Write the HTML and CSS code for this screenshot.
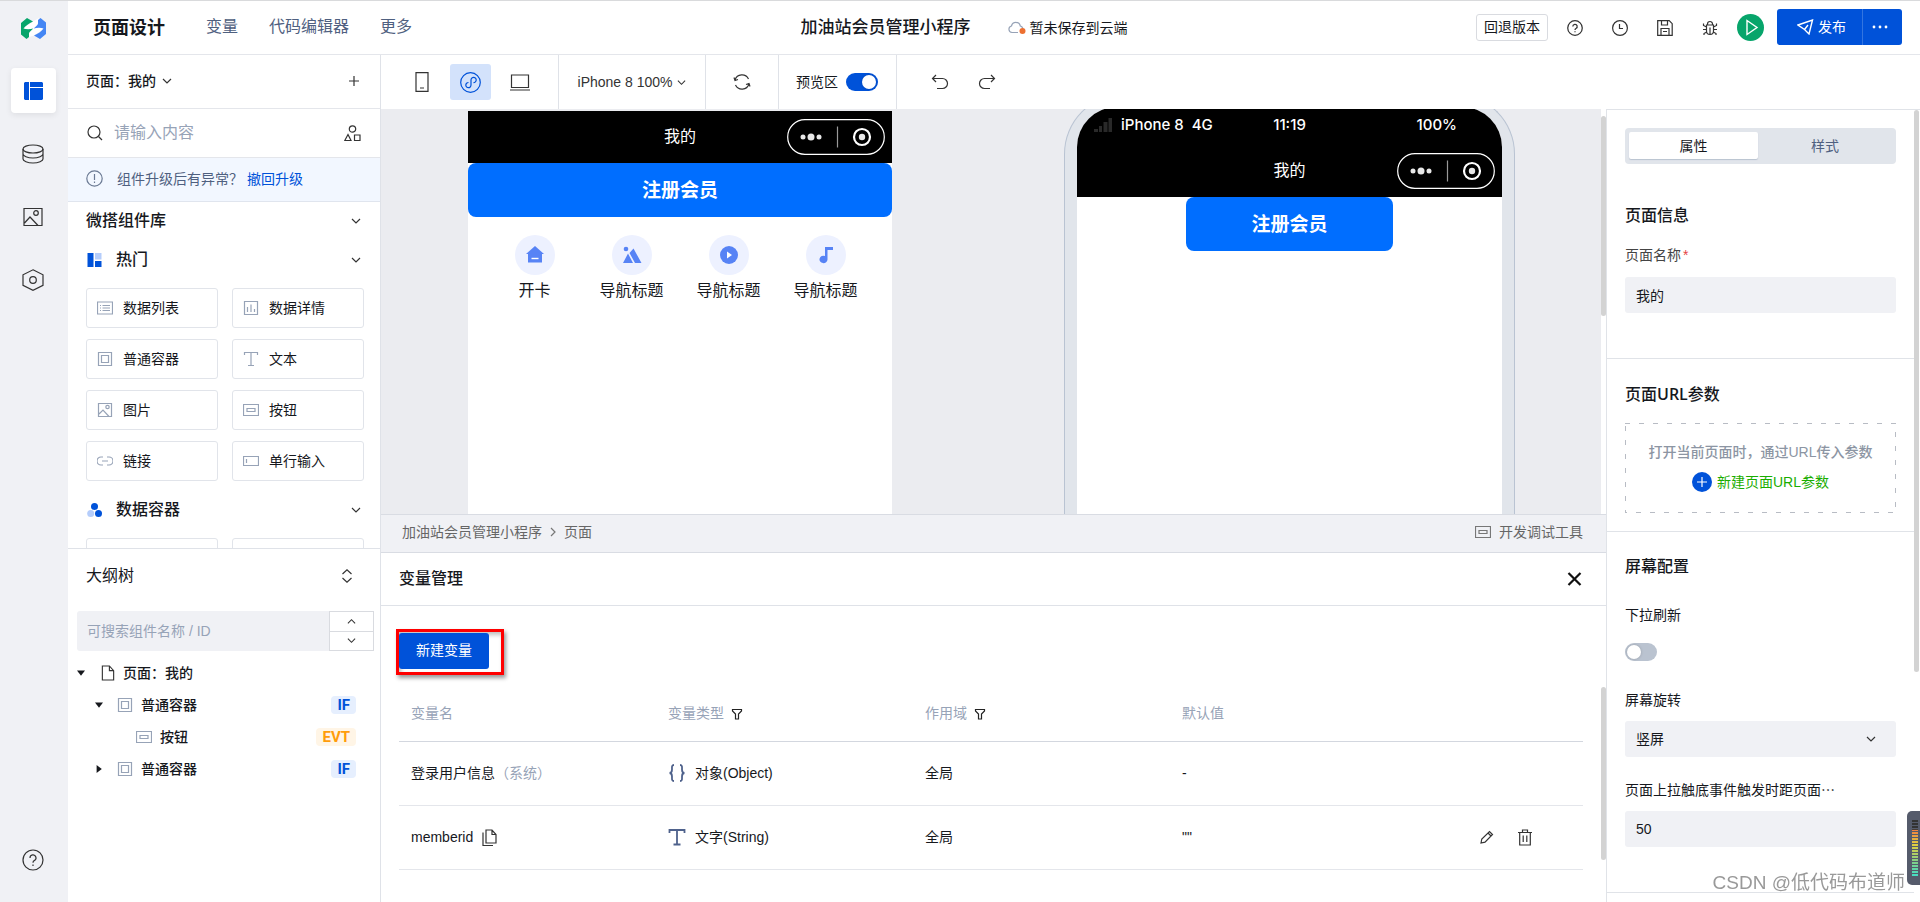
FILE: index.html
```html
<!DOCTYPE html>
<html lang="zh-CN">
<head>
<meta charset="utf-8">
<meta name="viewport" content="width=device-width, initial-scale=1">
<title>页面设计</title>
<link rel="stylesheet" href="styles.css">
</head>
<body>
<svg class="sprite" aria-hidden="true">
  <symbol id="i-down" viewBox="0 0 10 10"><path d="M1 3l4 4 4-4"/></symbol>
  <symbol id="i-up" viewBox="0 0 10 10"><path d="M1 7l4-4 4 4"/></symbol>
  <symbol id="i-box" viewBox="0 0 16 16"><path d="M1.500 1.500h13v13h-13zM4.500 4.500h7v7h-7z"/></symbol>
  <symbol id="i-btn" viewBox="0 0 16 16"><path d="M.5 2.500h15v11H.5zM4 6.500h8v3H4z"/></symbol>
  <symbol id="i-image" viewBox="0 0 16 16"><path d="M1.500 1.500h13v13h-13zM2 12l4-4 6 6.500"/><circle cx="10.500" cy="5" r="1.700"/></symbol>
  <symbol id="i-help" viewBox="0 0 22 22"><circle cx="11" cy="11" r="10"/><path d="M8 9a3 3 0 1 1 4.300 2.600c-.9.500-1.300 1-1.300 2.100"/><path d="M11 15.500v1.500"/></symbol>
  <symbol id="i-filter" viewBox="0 0 12 12"><path d="M1.500 1.500h9v1.500L7.500 6v5h-3V6l-3-3z"/></symbol>
  <symbol id="i-capsule" viewBox="0 0 98 36"><rect x=".7" y=".7" width="96.600" height="34.600" rx="17.300" stroke="#fff"/><g fill="#e8e8e8" stroke="none"><circle cx="16" cy="18" r="2.500"/><circle cx="24" cy="18" r="3.500"/><circle cx="32" cy="18" r="2.500"/><circle cx="75" cy="18" r="3.200"/></g><path stroke="#999" d="M50.500 7.500v21"/><circle cx="75" cy="18" r="8" stroke="#fff" stroke-width="2.200"/></symbol>
</svg>

<div class="app">
  <aside class="rail">
    <svg class="logo" viewBox="0 0 25 21"><path fill="#fff" d="M12 3.500L18 0l-1 9 7 1-11 7.500L8 19V12L1 11z"/><path fill="#07a56b" d="M0 5L6 0l6 3.500C8 5.500 4.500 7.500 2.500 10.500 5 11.500 9 11.500 12.300 10.500 10 12.500 8.300 14 8 15.500V19L5.500 21 0 16.500z"/><path fill="#4486f4" d="M25 16l-6 5-6-3.500c4-2 7.500-4 9.500-7C20 9.500 16 9.500 12.700 10.500 15 8.500 16.700 7 17 5.500V2L19.500 0 25 4.500z"/></svg>
    <nav class="rail-nav">
      <button class="rail-btn active" aria-label="页面"><svg width="19" height="18" viewBox="0 0 19 18"><path fill="#0052d9" stroke="none" d="M0 1l1-1h4v18H1l-1-1zM6 0h12l1 1v4H6zM6 6h13v11l-1 1H6z"/></svg></button>
      <button class="rail-btn" aria-label="数据"><svg width="22" height="20" viewBox="0 0 22 20"><ellipse cx="11" cy="5" rx="10" ry="4"/><path d="M1 5v10c0 2 4.500 4 10 4s10-2 10-4V5M1 10c0 2 4.500 4 10 4s10-2 10-4"/></svg></button>
      <button class="rail-btn" aria-label="素材"><svg width="20" height="20" viewBox="0 0 20 20"><path d="M1 1.500h18v17H1zM1.500 16L7 10l8 8.500"/><circle cx="13" cy="6" r="2.300"/></svg></button>
      <button class="rail-btn" aria-label="设置"><svg width="22" height="22" viewBox="0 0 22 22"><path d="M11 .8l10 5v10.500l-10 5-10-5V5.800z"/><circle cx="11" cy="11" r="3.300"/></svg></button>
    </nav>
    <button class="rail-btn rail-help" aria-label="帮助"><svg width="22" height="22"><use href="#i-help"/></svg></button>
  </aside>

  <header class="header">
    <h1 class="brand">页面设计</h1>
    <nav class="menu"><a href="#">变量</a><a href="#">代码编辑器</a><a href="#">更多</a></nav>
    <div class="doc">
      <span class="doc-name">加油站会员管理小程序</span>
      <span class="doc-state"><svg width="18" height="14" viewBox="0 0 18 14"><path stroke="#97a3b7" d="M10 11.500H4a3.300 3.300 0 0 1-.5-6.500A4.500 4.500 0 0 1 12.300 5c1.700.5 2.500 1.700 2.500 3"/><circle cx="14.500" cy="10" r="3" fill="#ed7031" stroke="none"/></svg>暂未保存到云端</span>
    </div>
    <button class="rollback">回退版本</button>
    <div class="tools">
      <button class="icon" aria-label="帮助"><svg width="16" height="16"><use href="#i-help" class="thick"/></svg></button>
      <button class="icon" aria-label="历史"><svg width="16" height="16" viewBox="0 0 16 16"><circle cx="8" cy="8" r="7.400"/><path d="M7.500 4v4.500H11"/></svg></button>
      <button class="icon" aria-label="保存"><svg width="16" height="16" viewBox="0 0 16 16"><path d="M.7.700h11.500l3 3v11.600H.7zM4.500 1v4h6V1M4 15V8.500h8V15M6 11.500h4"/></svg></button>
      <button class="icon" aria-label="调试"><svg width="16" height="16" viewBox="0 0 16 16"><path d="M4.500 5h7v6a3.500 3.500 0 0 1-7 0zM5.500 5V4a2.500 2.500 0 0 1 5 0v1M8 7.500V14M4.500 7L1.500 5.500V3.500M11.500 7l3-1.500v-2M4.500 9.500H1M11.500 9.500H15M4.700 12L2 13.500V15M11.300 12l2.700 1.500V15"/></svg></button>
    </div>
    <button class="play" aria-label="预览"><svg width="27" height="27" viewBox="0 0 27 27"><path d="M10 6.500v14l10-7z"/></svg></button>
    <div class="publish">
      <button class="publish-main"><svg width="17" height="16" viewBox="0 0 17 16"><path d="M1 6L15.500 1 12 15 7.500 10.500zM7.500 10.500L11 6"/></svg>发布</button>
      <button class="publish-more" aria-label="更多"><svg width="16" height="4" viewBox="0 0 16 4"><g fill="#fff" stroke="none"><circle cx="2" cy="2" r="1.400"/><circle cx="8" cy="2" r="1.400"/><circle cx="14" cy="2" r="1.400"/></g></svg></button>
    </div>
  </header>

  <aside class="side">
    <div class="page-row"><button class="page-pick">页面：我的 <svg width="10" height="10"><use href="#i-down"/></svg></button><button class="icon" aria-label="新增"><svg width="12" height="12" viewBox="0 0 12 12"><path d="M6 1v10M1 6h10"/></svg></button></div>
    <div class="find-row">
      <svg width="16" height="16" viewBox="0 0 16 16"><circle cx="7" cy="7" r="6"/><path d="M11.500 11.500L15 15"/></svg>
      <input class="find" type="text" placeholder="请输入内容" aria-label="搜索组件">
      <svg width="17" height="17" viewBox="0 0 17 17"><circle cx="8.500" cy="4" r="3.200"/><path d="M4 9.500L.8 15.500h6.200zM10.500 10h5.500v5.500h-5.500z"/></svg>
    </div>
    <div class="notice"><svg width="17" height="17" viewBox="0 0 17 17"><circle cx="8.500" cy="8.500" r="7.700"/><path d="M8.500 4v6M8.500 11.500v1.500"/></svg><span>组件升级后有异常？</span><a href="#">撤回升级</a></div>
    <section class="lib">
      <h2 class="lib-title">微搭组件库<svg width="10" height="10"><use href="#i-down"/></svg></h2>
      <h3 class="lib-group"><svg width="15" height="14" viewBox="0 0 15 14"><g stroke="none"><path fill="#0052d9" d="M.5 0h6v14h-6zM8 8h6.500v6H8z"/><path fill="#b5cdfb" d="M8 0h6.500v6.500H8z"/></g></svg><span>热门</span><svg width="10" height="10"><use href="#i-down"/></svg></h3>
      <div class="tiles">
        <button class="tile"><svg viewBox="0 0 16 16"><path d="M.5 2h15v12H.5zM3 5.500h1M3 8h1M3 10.500h1M5.500 5.500H13M5.500 8H13M5.500 10.500H13"/></svg>数据列表</button>
        <button class="tile"><svg viewBox="0 0 16 16"><path d="M1.500 1.500h13v13h-13zM4.500 7v5M8 4.500V12M11.500 9v3"/></svg>数据详情</button>
        <button class="tile"><svg><use href="#i-box"/></svg>普通容器</button>
        <button class="tile"><svg viewBox="0 0 16 16"><path d="M1.500 4V1.500h13V4M8 1.500v13M5 14.500h6"/></svg>文本</button>
        <button class="tile"><svg><use href="#i-image"/></svg>图片</button>
        <button class="tile"><svg><use href="#i-btn"/></svg>按钮</button>
        <button class="tile"><svg viewBox="0 0 16 16"><path d="M6 4H4a4 4 0 0 0 0 8h2M10 4h2a4 4 0 0 1 0 8h-2M5 8h6"/></svg>链接</button>
        <button class="tile"><svg viewBox="0 0 16 16"><path d="M.5 3.500h15v9H.5zM3.500 6v4"/></svg>单行输入</button>
      </div>
      <h3 class="lib-group"><svg width="15" height="14" viewBox="0 0 15 14"><g stroke="none"><circle cx="7.500" cy="3.500" r="3.500" fill="#0052d9"/><circle cx="3.700" cy="10.500" r="3.500" fill="#b5cdfb"/><circle cx="11.500" cy="10.500" r="3.500" fill="#0052d9"/></g></svg><span>数据容器</span><svg width="10" height="10"><use href="#i-down"/></svg></h3>
      <div class="tiles"><button class="tile" aria-label="组件"></button><button class="tile" aria-label="组件"></button></div>
    </section>
    <section class="outline">
      <h2 class="outline-title">大纲树<svg width="12" height="14" viewBox="0 0 12 14"><path d="M1.500 5L6 .8 10.500 5M1.500 9L6 13.200 10.500 9"/></svg></h2>
      <div class="outline-find">
        <input type="text" placeholder="可搜索组件名称 / ID" aria-label="搜索大纲">
        <div class="steps"><button aria-label="上一个"><svg width="9" height="9"><use href="#i-up"/></svg></button><button aria-label="下一个"><svg width="9" height="9"><use href="#i-down"/></svg></button></div>
      </div>
      <ul class="tree">
        <li><span class="caret open"></span><svg class="file" viewBox="0 0 14 17"><path d="M1 1h7.500l4.500 5v10H1zM8.500 1v5H13"/></svg>页面：我的</li>
        <li class="l1"><span class="caret open"></span><svg class="dim"><use href="#i-box"/></svg>普通容器<b class="tag">IF</b></li>
        <li class="l2"><svg class="dim"><use href="#i-btn"/></svg>按钮<b class="tag evt">EVT</b></li>
        <li class="l1"><span class="caret"></span><svg class="dim"><use href="#i-box"/></svg>普通容器<b class="tag">IF</b></li>
      </ul>
    </section>
  </aside>

  <div class="toolbar">
    <div class="tb devices">
      <button aria-label="手机"><svg width="14" height="20" viewBox="0 0 14 20"><path d="M1 .7h12v18.600H1zM5 16h4"/></svg></button>
      <button class="on" aria-label="小程序"><svg width="21" height="21" viewBox="0 0 21 21"><circle cx="10.500" cy="10.500" r="9.800"/><path d="M8.500 10.500a2.600 2.600 0 1 0 2.500 2.600V8a2.600 2.600 0 1 1 2.500 2.600"/></svg></button>
      <button aria-label="电脑"><svg width="20" height="17" viewBox="0 0 20 17"><path d="M1.500 1h17v12.500h-17zM0 16h20"/></svg></button>
    </div>
    <div class="tb"><button class="zoom">iPhone 8 100% <svg width="9" height="9"><use href="#i-down"/></svg></button></div>
    <div class="tb refresh"><button class="icon" aria-label="刷新"><svg width="18" height="18" viewBox="0 0 18 18"><path d="M2 7a7.300 7.300 0 0 1 13.500-1M16 11a7.300 7.300 0 0 1-13.500 1M1 4.500L2 7.500l3-1M17 13.500l-1-3-3 1"/></svg></button></div>
    <div class="tb area"><label class="switch-row">预览区<input class="switch" type="checkbox" checked></label></div>
    <div class="tb undo">
      <button class="icon" aria-label="撤销"><svg width="18" height="16" viewBox="0 0 18 16"><path d="M5 1L1.500 4.500 5 8M1.500 4.500h10a5 5 0 0 1 0 10H6"/></svg></button>
      <button class="icon" aria-label="重做"><svg width="18" height="16" viewBox="0 0 18 16"><path d="M13 1l3.500 3.500L13 8M16.500 4.500h-10a5 5 0 0 0 0 10H12"/></svg></button>
    </div>
  </div>

  <main class="work">
    <div class="stage">
      <div class="canvas">
        <div class="preview">
          <div class="mini-bar"><span>我的</span><svg class="capsule"><use href="#i-capsule"/></svg></div>
          <button class="join">注册会员</button>
          <div class="navs">
            <div class="nav"><span class="dot"><svg viewBox="0 0 20 20"><path d="M10 1l9 8h-2v8.500H3V9H1z"/><path d="M6.500 13.500h7" stroke="#fff" stroke-width="1.400"/></svg></span>开卡</div>
            <div class="nav"><span class="dot"><svg viewBox="0 0 20 20"><circle cx="4" cy="4" r="2.300"/><path d="M1 18l5-9.500L11 18zM7.500 8l4-4.500L19.500 18H13z"/></svg></span>导航标题</div>
            <div class="nav"><span class="dot"><svg viewBox="0 0 20 20"><circle cx="10" cy="10" r="9"/><path fill="#fff" d="M8 6.500v7l5-3.500z"/></svg></span>导航标题</div>
            <div class="nav"><span class="dot"><svg viewBox="0 0 20 20"><path d="M9 2h8v3h-5.500v9.500A4 3.700 0 1 1 9 11z"/></svg></span>导航标题</div>
          </div>
        </div>
        <div class="phone">
          <div class="screen">
            <div class="status"><span class="carrier"><svg width="18" height="14" viewBox="0 0 18 14"><path fill="#292929" stroke="none" d="M0 11h4v3H0zM5 8h3v6H5zM9.500 4h4v10h-4zM14.500 0H18v14h-3.500z"/></svg>iPhone 8&nbsp; 4G</span><span>11:19</span><span>100%</span></div>
            <div class="mini-bar"><span>我的</span><svg class="capsule"><use href="#i-capsule"/></svg></div>
            <button class="join small">注册会员</button>
          </div>
        </div>
      </div>
      <div class="gutter"><span class="thumb"></span></div>
    </div>
    <div class="crumbs"><span>加油站会员管理小程序</span><svg width="6" height="10" viewBox="0 0 6 10"><path d="M1 1l4 4-4 4"/></svg><span>页面</span><button class="devtools"><svg width="16" height="16"><use href="#i-btn"/></svg>开发调试工具</button></div>
    <div class="vars-head"><h2>变量管理</h2><button aria-label="关闭"><svg width="15" height="14" viewBox="0 0 15 14"><path d="M1.500 1l12 12M13.500 1l-12 12" stroke-width="2.200"/></svg></button></div>
    <div class="vars">
      <div class="vars-body">
        <div class="mark"><button class="create">新建变量</button></div>
        <table class="table">
          <colgroup><col class="c"><col class="c"><col class="c"><col class="c"><col></colgroup>
          <thead><tr><th>变量名</th><th>变量类型<svg class="flt"><use href="#i-filter"/></svg></th><th>作用域<svg class="flt"><use href="#i-filter"/></svg></th><th>默认值</th><th></th></tr></thead>
          <tbody>
            <tr><td>登录用户信息<span class="sys">（系统）</span></td><td><span class="type"><svg width="18" height="18" viewBox="0 0 18 18"><path stroke="#4f628c" stroke-width="1.800" d="M6 1C3.500 1 4 3 4 5.500S3.500 9 1.500 9C3.500 9 4 10 4 12.500S3.500 17 6 17M12 1c2.500 0 2 2 2 4.500S14.500 9 16.500 9C14.500 9 14 10 14 12.500s.5 4.500-2 4.500"/></svg>对象(Object)</span></td><td>全局</td><td>-</td><td></td></tr>
            <tr><td><span class="name">memberid<svg width="15" height="17" viewBox="0 0 15 17"><path d="M4 1h6l4 4.500V14H4zM10 1v4.500h4M1 3.500V16.500h10"/></svg></span></td><td><span class="type"><svg width="18" height="18" viewBox="0 0 18 18"><path stroke="#4f628c" stroke-width="1.800" d="M1.500 5V2h15v3M9 2v14.500M5.500 16.500h7"/></svg>文字(String)</span></td><td>全局</td><td>""</td><td><span class="acts"><button class="icon" aria-label="编辑"><svg width="14" height="14" viewBox="0 0 14 14"><path d="M1 13l.8-4L9.500 1.500l3 3L5 12.200zM8 3l3 3"/></svg></button><button class="icon" aria-label="删除"><svg width="14" height="17" viewBox="0 0 14 17"><path d="M0 3.500h14M4.500 3.500V1h5v2.500M1.700 3.500v12.500h10.600V3.500M5.200 6.500v6.500M8.800 6.500v6.500"/></svg></button></span></td></tr>
          </tbody>
        </table>
      </div>
      <div class="gutter low"><span class="thumb"></span></div>
    </div>
  </main>

  <aside class="props">
    <div class="props-body">
      <section class="sec first">
        <div class="tabs"><button class="on">属性</button><button>样式</button></div>
        <h2>页面信息</h2>
        <label class="lab soft" for="pname">页面名称<i>*</i></label>
        <input class="field" id="pname" type="text" value="我的">
      </section>
      <section class="sec url">
        <h2>页面<span class="latin">URL</span>参数</h2>
        <div class="drop"><svg class="dash" width="100%" height="100%"><rect x="0" y="0" width="100%" height="100%"/></svg><p>打开当前页面时，通过URL传入参数</p><button class="add"><svg width="20" height="20" viewBox="0 0 20 20"><circle cx="10" cy="10" r="10" fill="#0052d9" stroke="none"/><path stroke="#fff" d="M10 5v10M5 10h10"/></svg>新建页面URL参数</button></div>
      </section>
      <section class="sec conf">
        <h2>屏幕配置</h2>
        <label class="lab" for="pull">下拉刷新</label>
        <input class="switch" id="pull" type="checkbox">
        <label class="lab" for="rot">屏幕旋转</label>
        <span class="select"><select class="field" id="rot"><option>竖屏</option></select><svg width="10" height="10"><use href="#i-down"/></svg></span>
        <label class="lab" for="dist">页面上拉触底事件触发时距页面<span class="mid">⋯</span></label>
        <input class="field" id="dist" type="text" value="50">
      </section>
    </div>
    <div class="gutter right"><span class="thumb"></span></div>
  </aside>
</div>
<div class="watermark">CSDN @低代码布道师</div>
<div class="gadget"><span></span></div>
</body>
</html>
```
FILE: styles.css
```css
* { box-sizing: border-box; }
html, body { height: 100%; margin: 0; }
body {
  font: 14px/20px "Liberation Sans", "Noto Sans CJK SC", sans-serif;
  color: #16181d; background: #fff; overflow: hidden;
}
h1, h2, h3, p, ul { margin: 0; padding: 0; font-weight: 500; }
ul { list-style: none; }
button, input, select { font: inherit; color: inherit; border: 0; padding: 0; background: none; outline: 0; }
button { display: inline-flex; align-items: center; justify-content: center; white-space: nowrap; }
a { color: #0052d9; text-decoration: none; }
svg { fill: none; stroke: #333; stroke-width: 1.2; flex: none; }
.sprite { position: absolute; width: 0; height: 0; }
.thick { stroke-width: 1.7; }

.app {
  height: 100vh; display: grid; border-top: 1px solid #d9dadc;
  grid-template-columns: 68px 313px minmax(0, 1fr) 314px;
  grid-template-rows: 54px 54px minmax(0, 1fr);
}

/* rail */
.rail { grid-row: 1 / 4; background: #f0f1f5; display: flex; flex-direction: column; align-items: center; padding: 17px 2px 20px 0; }
.logo { width: 25px; height: 21px; margin-bottom: 29px; stroke: none; }
.rail-nav { display: flex; flex-direction: column; gap: 18px; }
.rail-btn { width: 45px; height: 45px; border-radius: 4px; }
.rail-btn.active { background: #fff; box-shadow: 0 2px 6px rgba(0, 0, 0, .08); }
.rail-help { margin-top: auto; }

/* header */
.header { grid-column: 2 / 5; display: flex; align-items: center; padding: 0 18px 0 25px; border-bottom: 1px solid #e4e6eb; }
.brand { font-size: 18px; font-weight: 700; }
.menu { display: flex; gap: 31px; margin-left: 41px; padding-bottom: 2px; font-size: 16px; }
.menu a { color: #4f6080; }
.doc { display: flex; align-items: center; gap: 37px; margin: 0 auto; padding-left: 40px; }
.doc-name { font-size: 17px; font-weight: 500; }
.doc-state { display: flex; align-items: center; gap: 4px; }
.rollback { width: 72px; height: 27px; padding-bottom: 1px; border: 1px solid #d9dbe0; border-radius: 3px; }
.tools { display: flex; gap: 29px; margin: 0 19px; }
.play { width: 27px; height: 27px; border-radius: 50%; background: #07a56b; }
.play svg, .publish svg { stroke: #fff; stroke-width: 1.4; }
.publish { display: flex; height: 36px; margin: 0 0 1px 13px; background: #0052d9; color: #fff; border-radius: 3px; }
.publish-main { width: 86px; padding-left: 4px; gap: 4px; border-right: 1px solid #3375e0; }
.publish-more { width: 39px; padding-right: 4px; }

/* left panel */
.side { grid-row: 2 / 4; display: flex; flex-direction: column; border-right: 1px solid #dfe2e8; min-height: 0; }
.page-row { height: 54px; display: flex; align-items: center; justify-content: space-between; padding: 0 20px 2px 18px; border-bottom: 1px solid #e4e6eb; }
.page-pick { gap: 6px; font-weight: 500; }
.find-row { height: 49px; display: flex; align-items: center; gap: 11px; padding: 0 19px; border-bottom: 1px solid #e4e6eb; }
.find { flex: 1; min-width: 0; font-size: 16px; }
input::placeholder { color: #97a3b7; opacity: 1; }
.notice { height: 44px; display: flex; align-items: center; padding: 0 0 2px 18px; background: #f2f7ff; border-bottom: 1px solid #e0e5ee; color: #4f6080; }
.notice svg { stroke: #6b7a94; margin-right: 14px; }
.notice a { margin-left: 4px; }
.lib { flex: 1; min-height: 0; overflow: hidden; padding: 0 16px 0 18px; }
.lib-title, .lib-group { display: flex; align-items: center; height: 38px; font-size: 16px; padding-right: 3px; }
.lib-title svg, .lib-group svg:last-child { margin-left: auto; }
.lib-group { height: 48px; gap: 14px; padding: 0 3px 9px 1px; }
.tiles + .lib-group { height: 57px; padding-bottom: 0; }
.tiles { display: grid; grid-template-columns: 1fr 1fr; gap: 11px 14px; }
.tile { height: 40px; justify-content: flex-start; gap: 10px; padding: 0 10px 1px; border: 1px solid #e1e4ea; border-radius: 3px; }
.tile svg { width: 16px; height: 16px; stroke: #97a3b7; }
.outline { height: 354px; border-top: 1px solid #dfe2e8; padding: 0 6px 0 9px; }
.outline-title { display: flex; align-items: center; justify-content: space-between; height: 62px; padding: 0 21px 8px 9px; font-size: 16px; font-weight: 400; }
.outline-find { display: flex; height: 40px; margin-bottom: 6px; }
.outline-find input { flex: 1; min-width: 0; background: #f0f1f5; border-radius: 3px 0 0 3px; padding-left: 10px; }
.steps { display: grid; width: 45px; border: 1px solid #d9dbe0; }
.steps button + button { border-top: 1px solid #d9dbe0; }
.tree li { display: flex; align-items: center; height: 32px; gap: 8px; padding-right: 18px; }
.tree .l1 { padding-left: 18px; }
.tree .l2 { padding-left: 59px; }
.tree svg { width: 14px; height: 16px; }
.tree .file { margin: 0 0 0 8px; }
.tree .dim { stroke: #97a3b7; width: 16px; }
.tree .l1 .dim { margin-left: 6px; }
.caret { width: 8px; height: 8px; background: #16181d; clip-path: polygon(20% 0, 85% 50%, 20% 100%); }
.caret.open { clip-path: polygon(0 20%, 100% 20%, 50% 85%); }
.tag { margin-left: auto; height: 18px; padding: 0 6px; border-radius: 4px; background: #e6effe; color: #0052d9; font: 700 15px/19px Roboto, sans-serif; }
.tag.evt { background: #fff5e6; color: #ff9d0a; }

/* toolbar */
.toolbar { grid-column: 3 / 5; display: flex; }
.tb { display: flex; align-items: center; justify-content: center; border-right: 1px solid #dfe2e8; padding: 0 18px; }
.devices { gap: 8px; padding: 0 18px 0 20px; }
.devices button { width: 41px; height: 36px; border-radius: 3px; }
.devices .on { background: #d3e2fb; }
.devices .on svg { stroke: #0052d9; }
.refresh { padding: 0 27px; }
.area { padding: 0 18px 0 17px; }
.zoom { gap: 5px; width: 110px; color: #333; }
.switch-row { display: flex; align-items: center; gap: 8px; }
.switch { appearance: none; width: 32px; height: 18px; margin: 0; border-radius: 9px; background: #bac3d0; padding: 2px; }
.switch::before { content: ""; display: block; width: 14px; height: 14px; border-radius: 50%; background: #fff; box-shadow: 0 0 3px rgba(0, 0, 0, .2); }
.switch:checked { background: #0052d9; }
.switch:checked::before { margin-left: auto; }
.undo { border: 0; padding: 0 34px; gap: 29px; }

/* stage */
.work { display: flex; flex-direction: column; min-width: 0; min-height: 0; }
.stage { flex: 1; display: flex; min-height: 0; }
.canvas { flex: 1; min-width: 0; overflow: hidden; display: flex; justify-content: space-around; padding-left: 1px; background: #ebecf0; }
.preview { width: 424px; margin-top: 2px; background: #fff; }
.mini-bar { height: 52px; display: flex; align-items: center; justify-content: center; position: relative; background: #000; color: #fff; font-size: 16px; }
.capsule { position: absolute; right: 7px; top: 8px; width: 98px; height: 36px; }
.join { display: flex; width: 100%; height: 54px; padding-top: 2px; border-radius: 8px; background: #006eff; color: #fff; font-size: 19px; font-weight: 700; }
.join.small { width: 207px; margin: 0 auto; }
.navs { display: grid; grid-template-columns: repeat(4, 1fr); padding: 18px 18px 0; }
.nav { display: flex; flex-direction: column; align-items: center; gap: 6px; font-size: 16px; }
.dot { width: 40px; height: 40px; display: grid; place-items: center; border-radius: 50%; background: #edf1ff; }
.dot svg { width: 20px; height: 20px; fill: #5783f5; stroke: none; }
.phone { width: 451px; margin-top: -15px; padding: 12px 12px 0; border: 1px solid #b9c3d2; border-bottom: 0; border-radius: 60px 60px 0 0; background: #e1e5eb; }
.screen { height: 100%; background: #fff; border-radius: 40px 40px 0 0; overflow: hidden; }
.status { height: 38px; display: grid; grid-template-columns: 1fr auto 1fr; align-items: center; padding: 0 45px 2px 17px; background: #000; color: #fff; font: 500 15px/20px Inter, sans-serif; }
.status span:last-child { text-align: right; }
.status span:nth-child(2) { margin-left: 28px; }
.carrier { display: flex; align-items: center; gap: 9px; }
.gutter { flex: none; width: 5px; background: #fff; padding-top: 7px; }
.thumb { display: block; width: 5px; height: 200px; border-radius: 3px; background: #d3d3d3; }
.gutter.low { padding-top: 81px; }
.gutter.low .thumb { height: 173px; }

.crumbs { height: 39px; display: flex; align-items: center; gap: 8px; padding: 0 23px 3px 21px; background: #f0f1f5; border: 1px solid #d9dce3; border-width: 1px 0; color: #666; }
.crumbs svg { stroke: #777; }
.devtools { margin-left: auto; gap: 8px; }
.vars-head { height: 53px; display: flex; align-items: center; justify-content: space-between; padding: 0 24px 0 18px; border-bottom: 1px solid #dfe2e8; }
.vars-head h2 { font-size: 16px; }
.vars-head svg { stroke: #111; }
.vars { display: flex; height: 296px; }
.vars-body { flex: 1; min-width: 0; padding: 23px 18px 0 15px; }
.mark { width: 108px; height: 46px; border: 3px solid #f00; padding: 1px 0; box-shadow: 2px 3px 4px rgba(0, 0, 0, .4), inset 2px 3px 4px rgba(0, 0, 0, .25); }
.create { width: 90px; height: 36px; padding-bottom: 2px; border-radius: 3px; background: #0052d9; color: #fff; }
.table { width: calc(100% - 3px); margin: 10px 0 0 3px; border-collapse: collapse; table-layout: fixed; }
.table .c { width: 257px; }
.table th { height: 56px; padding: 0 0 0 12px; text-align: left; font-weight: 400; color: #97a3b7; border-bottom: 1px solid #d3d7df; }
.table td { height: 64px; padding: 0 0 0 12px; border-bottom: 1px solid #e4e6eb; }
.flt { width: 12px; height: 12px; margin-left: 7px; vertical-align: -2px; stroke: #222; }
.sys { color: #97a3b7; }
.type, .name, .acts { display: flex; align-items: center; gap: 9px; }
.acts { justify-content: flex-end; gap: 24px; padding-right: 51px; }

/* properties */
.props { display: flex; min-height: 0; border: solid #e0e3e8; border-width: 1px 0 0 1px; overflow: hidden; }
.props-body { flex: 1; min-width: 0; }
.gutter.right { padding: 0; width: 6px; }
.gutter.right .thumb { height: 562px; }
.sec { display: flex; flex-direction: column; padding: 0 18px; border-bottom: 1px solid #e0e3e8; }
.sec h2 { font-size: 16px; line-height: 24px; }
.latin { font-family: "Open Sans", sans-serif; font-weight: 600; }
.tabs { display: grid; grid-template-columns: 49fr 51fr; height: 36px; margin: 18px 0 40px; padding: 4px; border-radius: 4px; background: #e1e5eb; color: #4f6080; }
.tabs .on { background: #fff; color: #16181d; border-radius: 2px; box-shadow: 0 1px 1px #b9c2d0; margin-bottom: 1px; }
.lab { line-height: 20px; }
.soft { color: #444; margin: 17px 0 12px; }
.lab i { color: #e54545; margin-left: 2px; font-style: normal; }
.field { width: 100%; height: 36px; padding: 0 11px; border-radius: 3px; background: #f0f1f5; }
.first { padding-bottom: 45px; }
.url { padding-top: 23px; padding-bottom: 18px; }
.drop { position: relative; display: flex; flex-direction: column; align-items: center; gap: 10px; margin-top: 16px; padding: 19px 0 21px; color: #8c95a3; }
.dash { position: absolute; inset: 0; stroke: #b8bcc4; stroke-width: 2; stroke-dasharray: 5 9; }
.add { gap: 5px; color: #1aad00; }
.conf { padding-top: 23px; padding-bottom: 45px; }
.conf .lab { margin: 29px 0 11px; }
.conf h2 + .lab { margin: 26px 0 18px; }
.conf .select + .lab { margin: 23px 0 11px; }
.select { display: block; position: relative; }
.select select { appearance: none; }
.select svg { position: absolute; right: 20px; top: 13px; }

.watermark { position: fixed; right: 15px; bottom: 6px; font-size: 19px; line-height: 26px; color: #999; text-shadow: 1px 1px 0 #fff; }
.gadget { position: fixed; right: 0; bottom: 17px; width: 13px; height: 74px; padding: 8px 2px 8px 5px; border-radius: 5px 0 0 5px; background: #555b6b; }
.gadget span { display: block; height: 100%; background: repeating-linear-gradient(#555b6b 0 1px, transparent 1px 3px), linear-gradient(#333 18%, #f08040 19%, #e0d040 45%, #7ed08a 75%, #3fe0c8); }
```
